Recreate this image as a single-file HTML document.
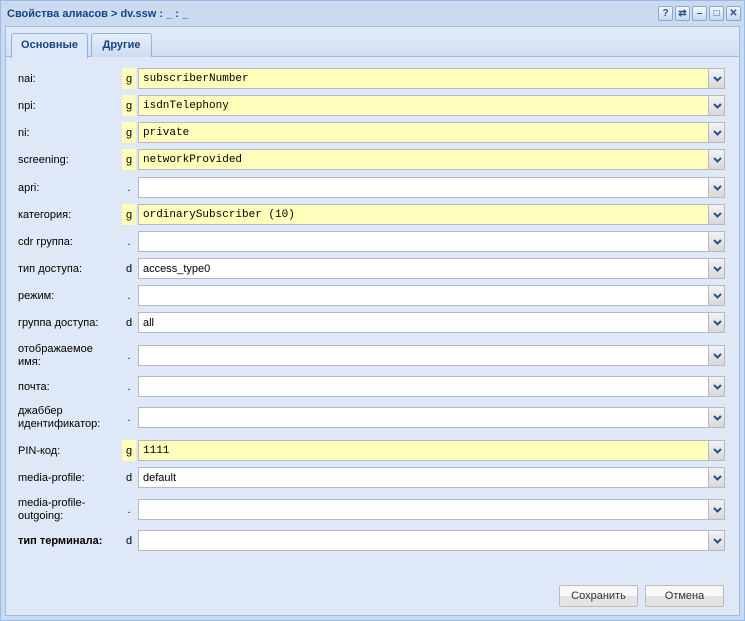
<!DOCTYPE html><html><head><meta charset="utf-8"><style>
*{margin:0;padding:0;box-sizing:border-box}
body{width:745px;height:621px;background:#fff;font-family:"Liberation Sans",sans-serif;font-size:11px;position:relative;overflow:hidden}
.win{position:absolute;left:0;top:0;width:745px;height:621px;background:#cbdaee;border:1px solid #99bbe8}
.title{position:absolute;left:6px;top:7px;font-weight:bold;color:#15428b;font-size:11px}
.tb{position:absolute;top:5px;width:15px;height:15px;border:1px solid #8aa8cf;border-radius:2px;background:linear-gradient(#f4f8fd,#c8d8ee);color:#2a5290;font-size:10px;line-height:13px;text-align:center;font-weight:bold}
.body{position:absolute;left:5px;top:26px;width:735px;height:590px;background:#dfe8f6;border:1px solid #99bbe8}
.strip{position:absolute;left:0;top:0;width:733px;height:30px;background:linear-gradient(#e3ebf7,#d3e0f2);border-bottom:1px solid #99bbe8}
.tab{position:absolute;top:6px;height:24px;border:1px solid #8db2e3;border-bottom:none;border-radius:3px 3px 0 0;font-weight:bold;color:#15428b;line-height:22px;text-align:center}
.lbl{position:absolute;left:18px;color:#000;line-height:13px}
.fl{position:absolute;left:122px;width:14px;height:21px;line-height:22px;text-align:center}
.fl.y{background:#ffffbb}
.in{position:absolute;left:138px;width:571px;height:21px;border:1px solid #b5b8c8;background:#fff;padding:2px 0 0 4px;line-height:17px}
.in.y{background:#ffffbb;font-family:"Liberation Mono",monospace;font-size:11px}
.tr{position:absolute;left:708px;width:17px;height:21px;border:1px solid #b5b8c8;background:linear-gradient(#f3f3f3,#d8d8d8)}
.tr svg{position:absolute;left:4px;top:7px}
.btn{position:absolute;top:585px;height:22px;width:79px;border:1px solid #bbb;border-radius:2px;background:linear-gradient(#f8f8f8 50%,#e4e4e4 50%);text-align:center;line-height:21px;color:#333}
</style></head><body>
<div class="win">
<div class="title">Свойства алиасов &gt; dv.ssw : _ : _</div>
<div class="tb" style="left:657px">?</div>
<div class="tb" style="left:674px">⇄</div>
<div class="tb" style="left:691px">–</div>
<div class="tb" style="left:708px">□</div>
<div class="tb" style="left:725px">✕</div>
</div>
<div class="body"><div class="strip">
<div class="tab" style="left:5px;width:77px;background:#dfe8f6;height:25px">Основные</div>
<div class="tab" style="left:85px;width:61px;background:linear-gradient(#e6eef9,#cfdcef)">Другие</div>
</div></div>
<div id="rows"></div>
<script>
var R=[["nai:","g","subscriberNumber",78],["npi:","g","isdnTelephony",105],["ni:","g","private",132],["screening:","g","networkProvided",159],["apri:",".","",187],["категория:","g","ordinarySubscriber (10)",214],["cdr группа:",".","",241],["тип доступа:","d","access_type0",268],["режим:",".","",295],["группа доступа:","d","all",322],["отображаемое<br>имя:",".","",355],["почта:",".","",386],["джаббер<br>идентификатор:",".","",417],["PIN-код:","g","1111",450],["media-profile:","d","default",477],["media-profile-<br>outgoing:",".","",509],["<b>тип терминала:</b>","d","",540]];
var h="";R.forEach(function(r){var c=r[3],t=c-10,two=r[0].indexOf("<br>")>0,y=r[1]=="g"?" y":"";
h+='<div class="lbl" style="top:'+(two?c-12:c-5)+'px">'+r[0]+'</div><div class="fl'+y+'" style="top:'+t+'px">'+r[1]+'</div><div class="in'+y+'" style="top:'+t+'px">'+r[2]+'</div><div class="tr" style="top:'+t+'px"><svg width="9" height="6"><path d="M1 1L4.5 4.5L8 1" stroke="#2a4f8a" stroke-width="2" fill="none"/></svg></div>';});
document.getElementById("rows").innerHTML=h;
</script>
<div class="btn" style="left:559px">Сохранить</div>
<div class="btn" style="left:645px">Отмена</div>
</body></html>
